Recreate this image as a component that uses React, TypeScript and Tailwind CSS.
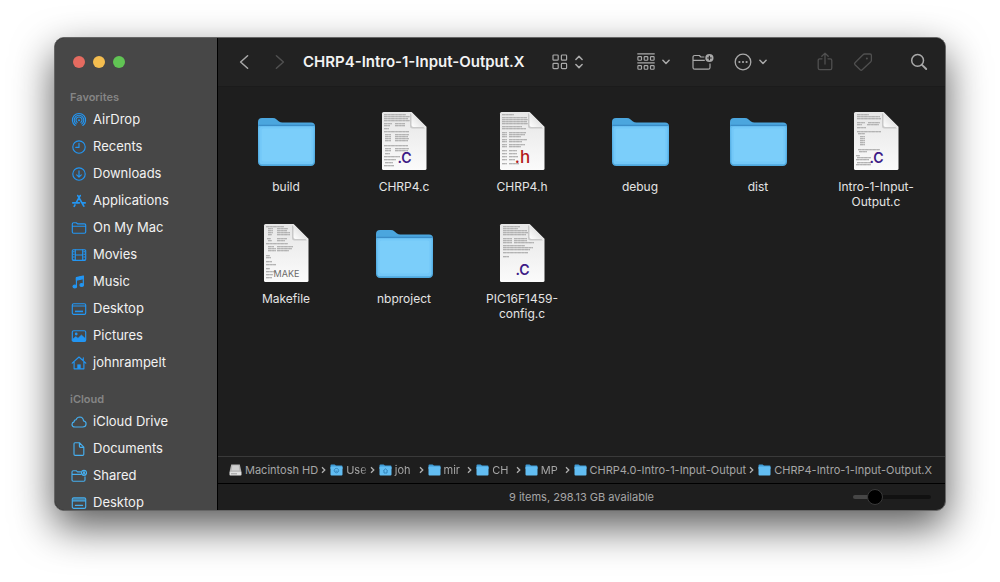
import * as React from "react";

type IconProps = { className?: string };

function SideIcon(props: { children: React.ReactNode }) {
  return (
    <svg
      viewBox="0 0 16 16"
      className="size-4 shrink-0"
      fill="none"
      stroke="currentColor"
      strokeWidth="1.15"
      strokeLinecap="round"
      strokeLinejoin="round"
      aria-hidden="true"
    >
      {props.children}
    </svg>
  );
}

const icons = {
  airdrop: (
    <SideIcon>
      <path d="M4.2 13.5A6.6 6.6 0 1 1 11.8 13.5" />
      <path d="M5.2 11.9A4.8 4.8 0 1 1 10.8 11.9" />
      <path d="M6.1 10.3A3 3 0 1 1 9.9 10.3" />
      <circle cx="8" cy="8.3" r="1" fill="currentColor" stroke="none" />
    </SideIcon>
  ),
  recents: (
    <SideIcon>
      <circle cx="8" cy="8" r="6.2" />
      <path d="M8 4.2V8.4H4.8" />
    </SideIcon>
  ),
  downloads: (
    <SideIcon>
      <circle cx="8" cy="8" r="6.2" />
      <path d="M8 4.8V11M5.7 8.9L8 11.1L10.3 8.9" />
    </SideIcon>
  ),
  applications: (
    <SideIcon>
      <path d="M9.2 2.6L5.4 9.4M6.8 2.6L12.8 13.2M4 11.9L3.2 13.3M1.8 9.8H8.3M11.6 9.8H14.2" strokeWidth="1.7" />
    </SideIcon>
  ),
  folder: (
    <SideIcon>
      <path d="M1.3 12V3.9Q1.3 2.7 2.5 2.7H5.2L6.5 3.8H13.4Q14.7 3.8 14.7 5V12Q14.7 13.2 13.4 13.2H2.6Q1.3 13.2 1.3 12ZM1.5 6.2H14.5" />
    </SideIcon>
  ),
  movies: (
    <SideIcon>
      <rect x="1.3" y="2.7" width="13.4" height="10.6" rx="1" />
      <path d="M4.3 2.8V13.2M11.7 2.8V13.2M4.4 8H11.6" />
      <path d="M2.8 4.2V12.4M13.2 4.2V12.4" strokeDasharray="1 1.6" strokeLinecap="butt" strokeWidth="1.6" />
    </SideIcon>
  ),
  music: (
    <SideIcon>
      <path d="M5.4 12.2V4L12.3 2.4V10.6" />
      <path d="M5.4 3.6L12.3 2V4.6L5.4 6.2Z" fill="currentColor" />
      <ellipse cx="3.8" cy="12.5" rx="1.8" ry="1.5" fill="currentColor" />
      <ellipse cx="10.7" cy="11" rx="1.8" ry="1.5" fill="currentColor" />
    </SideIcon>
  ),
  desktop: (
    <SideIcon>
      <rect x="1.3" y="2.7" width="13.4" height="10.6" rx="1.4" />
      <path d="M1.5 5H14.5" />
      <rect x="4" y="9.6" width="8" height="1.6" fill="currentColor" stroke="none" />
    </SideIcon>
  ),
  pictures: (
    <SideIcon>
      <rect x="1.3" y="2.7" width="13.4" height="10.6" rx="1.4" />
      <path d="M1.6 11.2L4.8 8.6L7 10.3L10.4 7L14.4 10.6V13H1.6Z" fill="currentColor" strokeWidth="0.6" />
      <circle cx="5.2" cy="6" r="1.4" fill="currentColor" stroke="none" />
    </SideIcon>
  ),
  home: (
    <SideIcon>
      <path d="M1.2 8.2L8 2L14.8 8.2M3.1 7V13.8H12.9V7M12.3 2.8V5.4" />
      <rect x="6.3" y="9.4" width="3.4" height="4.4" fill="currentColor" stroke="none" />
    </SideIcon>
  ),
  cloud: (
    <SideIcon>
      <path d="M4 13Q1 13 1 10.5Q1 8.4 3.1 7.9Q3 5.9 5 5.7Q6.2 3 8.8 3Q12.2 3.2 12.5 6.9Q15.2 7.4 15.1 10Q14.9 13 11.8 13Z" />
    </SideIcon>
  ),
  document: (
    <SideIcon>
      <path d="M4 1.7H8.4L12.8 6.2V13.2Q12.8 14.4 11.6 14.4H4.2Q3 14.4 3 13.2V2.8Q3 1.7 4 1.7ZM8.4 1.9V5.2Q8.4 6.3 9.5 6.3H12.7" />
    </SideIcon>
  ),
  shared: (
    <SideIcon>
      <path d="M9.6 3.8H6.4L5.2 2.7H2.3Q1 2.7 1 4V12Q1 13.2 2.3 13.2H12.8Q14 13.2 14 12V8.8M1.2 6.3H10" />
      <circle cx="13" cy="4.8" r="2.5" />
      <circle cx="13" cy="4.3" r="1.1" fill="currentColor" stroke="none" />
      <path d="M11.5 6.4Q13 5 14.5 6.4" />
    </SideIcon>
  ),
  cloudDesktop: (
    <SideIcon>
      <rect x="1.3" y="2.7" width="13.4" height="10.6" rx="1.4" />
      <rect x="1.6" y="3" width="12.8" height="3" fill="currentColor" fillOpacity="0.55" stroke="none" />
      <path d="M1.5 6H14.5M4.4 10.4H11.6" />
    </SideIcon>
  ),
};

const favorites = [
  { label: "AirDrop", icon: icons.airdrop },
  { label: "Recents", icon: icons.recents },
  { label: "Downloads", icon: icons.downloads },
  { label: "Applications", icon: icons.applications },
  { label: "On My Mac", icon: icons.folder },
  { label: "Movies", icon: icons.movies },
  { label: "Music", icon: icons.music },
  { label: "Desktop", icon: icons.desktop },
  { label: "Pictures", icon: icons.pictures },
  { label: "johnrampelt", icon: icons.home },
];

const icloud = [
  { label: "iCloud Drive", icon: icons.cloud },
  { label: "Documents", icon: icons.document },
  { label: "Shared", icon: icons.shared },
  { label: "Desktop", icon: icons.cloudDesktop },
];

function SidebarSection(props: {
  title: string;
  items: { label: string; icon: React.ReactNode }[];
  tint: string;
}) {
  return (
    <section>
      <h2 className="h-[18px] pl-[15px] text-[11px] leading-[18px] font-semibold text-[#858585]">{props.title}</h2>
      <ul>
        {props.items.map((item) => (
          <li key={item.label}>
            <a href="#" className="flex h-[27px] items-center gap-[6px] pl-4 text-[13px] text-[#f2f2f2]">
              <span className={props.tint}>{item.icon}</span>
              {item.label}
            </a>
          </li>
        ))}
      </ul>
    </section>
  );
}

function Sidebar() {
  return (
    <aside className="w-[163px] shrink-0 overflow-hidden border-r border-black bg-[#474747] pt-[18px]">
      <div className="mb-5 flex gap-2 pl-[18px]">
        <button aria-label="Close" className="size-3 rounded-full bg-[#e56b60]" />
        <button aria-label="Minimize" className="size-3 rounded-full bg-[#f4bd4f]" />
        <button aria-label="Zoom" className="size-3 rounded-full bg-[#61c454]" />
      </div>
      <nav className="flex flex-col gap-[14px]">
        <SidebarSection title="Favorites" items={favorites} tint="text-[#2396f3]" />
        <SidebarSection title="iCloud" items={icloud} tint="text-[#46aeee]" />
      </nav>
    </aside>
  );
}

function Chevron(props: IconProps) {
  return (
    <svg viewBox="0 0 8 6" className={props.className} fill="none" stroke="currentColor" strokeWidth="1.5" strokeLinecap="round" strokeLinejoin="round">
      <path d="M0.9 1.3L4 4.5L7.1 1.3" />
    </svg>
  );
}

function Toolbar() {
  return (
    <header className="flex h-[49px] shrink-0 items-center border-b border-[#1b1b1b] bg-[#222222] pr-[17px] pl-[21px] text-[#a9a9a9]">
      <button aria-label="Back">
        <svg viewBox="0 0 10 16" className="h-4 w-[10px]" fill="none" stroke="currentColor" strokeWidth="1.5" strokeLinecap="round" strokeLinejoin="round">
          <path d="M8.6 1.8L1.6 8L8.6 14.2" />
        </svg>
      </button>
      <button aria-label="Forward" disabled className="ml-[26px] text-[#505050]">
        <svg viewBox="0 0 10 16" className="h-4 w-[10px]" fill="none" stroke="currentColor" strokeWidth="1.5" strokeLinecap="round" strokeLinejoin="round">
          <path d="M1.4 1.8L8.4 8L1.4 14.2" />
        </svg>
      </button>
      <h1 className="ml-[18px] flex-1 truncate text-[15px] font-semibold text-[#f2f2f2]">CHRP4-Intro-1-Input-Output.X</h1>
      <button aria-label="View as icons" className="flex items-center gap-[7px]">
        <svg viewBox="0 0 16 16" className="size-4" fill="none" stroke="currentColor" strokeWidth="1.2">
          <rect x="1" y="1" width="5.2" height="5.2" rx="0.8" />
          <rect x="9.4" y="1" width="5.2" height="5.2" rx="0.8" />
          <rect x="1" y="9.4" width="5.2" height="5.2" rx="0.8" />
          <rect x="9.4" y="9.4" width="5.2" height="5.2" rx="0.8" />
        </svg>
        <svg viewBox="0 0 8 14" className="h-[14px] w-2" fill="none" stroke="currentColor" strokeWidth="1.5" strokeLinecap="round" strokeLinejoin="round">
          <path d="M0.9 4.5L4 1.4L7.1 4.5M0.9 9.5L4 12.6L7.1 9.5" />
        </svg>
      </button>
      <button aria-label="Group items" className="ml-[54px] flex items-center gap-[7px]">
        <svg viewBox="0 0 18 18" className="size-[18px]" fill="none" stroke="currentColor" strokeWidth="1.15">
          <path d="M0.3 0.9H17.7M0.3 9.9H17.7" />
          <rect x="0.9" y="3.6" width="3.6" height="3.6" rx="0.7" />
          <rect x="7.2" y="3.6" width="3.6" height="3.6" rx="0.7" />
          <rect x="13.5" y="3.6" width="3.6" height="3.6" rx="0.7" />
          <rect x="0.9" y="12.6" width="3.6" height="3.6" rx="0.7" />
          <rect x="7.2" y="12.6" width="3.6" height="3.6" rx="0.7" />
          <rect x="13.5" y="12.6" width="3.6" height="3.6" rx="0.7" />
        </svg>
        <Chevron className="h-[6px] w-2" />
      </button>
      <button aria-label="New folder" className="ml-[22px]">
        <svg viewBox="0 0 22 18" className="h-[18px] w-[22px]" fill="none" stroke="currentColor" strokeWidth="1.2" strokeLinejoin="round">
          <path d="M12.4 4H8.8L7.4 2.5H2.8Q1 2.5 1 4.3V14.4Q1 16.2 2.8 16.2H16.2Q18 16.2 18 14.4V10.4M1.2 7.4H12.8" />
          <circle cx="17.4" cy="5" r="4.1" fill="currentColor" stroke="none" />
          <path d="M17.4 2.7V7.3M15.1 5H19.7" stroke="#222222" />
        </svg>
      </button>
      <button aria-label="More actions" className="ml-5 flex items-center gap-[7px]">
        <svg viewBox="0 0 18 18" className="size-[18px]" fill="none" stroke="currentColor" strokeWidth="1.3">
          <circle cx="9" cy="9" r="7.8" />
          <g fill="currentColor" stroke="none">
            <circle cx="5.4" cy="9" r="1.1" />
            <circle cx="9" cy="9" r="1.1" />
            <circle cx="12.6" cy="9" r="1.1" />
          </g>
        </svg>
        <Chevron className="h-[6px] w-2" />
      </button>
      <button aria-label="Share" disabled className="ml-[50px] text-[#505050]">
        <svg viewBox="0 0 16 20" className="h-5 w-4" fill="none" stroke="currentColor" strokeWidth="1.3" strokeLinecap="round" strokeLinejoin="round">
          <path d="M5 6.8H2.8Q1.2 6.8 1.2 8.4V16Q1.2 17.6 2.8 17.6H13.2Q14.8 17.6 14.8 16V8.4Q14.8 6.8 13.2 6.8H11M8 12V1.2M4.8 4.2L8 1.1L11.2 4.2" />
        </svg>
      </button>
      <button aria-label="Tags" disabled className="ml-5 text-[#505050]">
        <svg viewBox="0 0 20 20" className="size-5" fill="none" stroke="currentColor" strokeWidth="1.3" strokeLinejoin="round">
          <path d="M11.6 2H17Q18.4 2 18.4 3.4V8.2Q18.4 9 17.8 9.7L9.2 17.8Q8.2 18.7 7.2 17.8L2 12.8Q1 11.7 2 10.7L10 2.8Q10.7 2 11.6 2Z" />
          <circle cx="13.9" cy="6.4" r="1" fill="currentColor" stroke="none" />
        </svg>
      </button>
      <button aria-label="Search" className="ml-[37px]">
        <svg viewBox="0 0 18 18" className="size-[18px]" fill="none" stroke="currentColor" strokeWidth="1.5" strokeLinecap="round">
          <circle cx="7.6" cy="7.4" r="5.9" />
          <path d="M12 11.8L16.2 16" strokeWidth="1.9" />
        </svg>
      </button>
    </header>
  );
}

function FolderArt() {
  return (
    <svg viewBox="0 0 64 64" className="size-16" aria-hidden="true">
      <defs>
        <linearGradient id="folder-edge" x1="0" y1="0" x2="0" y2="1">
          <stop offset="0" stopColor="#64bdf0" />
          <stop offset="1" stopColor="#4fa9de" />
        </linearGradient>
      </defs>
      <path d="M4 13Q4 9 8 9H19Q21 9 22.6 10.4L25 12.4Q26.4 13.4 28.4 13.4H57Q61 13.4 61 17.4V30H4Z" fill="#4ba6de" />
      <path d="M4 20Q4 16.6 7.4 16.6H57.6Q61 16.6 61 20V52.6Q61 57 56.6 57H8.4Q4 57 4 52.6Z" fill="url(#folder-edge)" />
      <path d="M4.4 16.4H60.6" stroke="#3b8dc7" strokeWidth="1.2" />
      <rect x="5.4" y="17.8" width="54.2" height="37.4" rx="2.8" fill="#73c8f8" />
      <rect x="7.6" y="19.6" width="49.8" height="33" rx="2" fill="#7bcefa" />
    </svg>
  );
}

// each entry is [x, y, width] of one line of page preview text
const previews: Record<string, number[][]> = {
  code: [
    [13, 5, 22], [13, 7, 26], [13, 9, 24], [13, 11, 26], [13, 14, 8], [24, 14, 10], [13, 16, 6], [24, 16, 10],
    [13, 19, 5], [13, 22, 25], [14, 25, 6], [24, 25, 14], [14, 27, 6], [24, 27, 13], [14, 29, 6], [24, 29, 14],
    [14, 31, 6], [24, 31, 13], [13, 36, 24], [14, 39, 6], [24, 39, 14], [14, 41, 6], [24, 41, 13], [14, 44, 5],
    [13, 47, 16], [13, 50, 12], [14, 53, 8], [13, 56, 10],
  ],
  header: [
    [13, 5, 12], [13, 8, 25], [13, 10, 26], [13, 12, 25], [13, 14, 26], [13, 17, 20], [13, 19, 24],
    [13, 23, 5], [20, 23, 17], [13, 25, 5], [20, 25, 16], [13, 27, 5], [20, 27, 12], [13, 30, 5], [20, 30, 18],
    [13, 32, 5], [20, 32, 13], [13, 35, 5], [20, 35, 16], [13, 37, 5], [20, 37, 12], [13, 41, 5], [20, 41, 8],
    [13, 44, 5], [20, 44, 8], [13, 47, 5], [20, 47, 9], [13, 50, 5], [20, 50, 6], [13, 54, 5], [20, 54, 10],
  ],
  sparse: [
    [14, 5, 12], [14, 7, 23], [14, 9, 24], [14, 13, 8], [25, 13, 12], [14, 15, 5], [24, 15, 12], [14, 18, 9],
    [14, 22, 24], [15, 24, 7], [17, 27, 5], [17, 29, 5], [17, 31, 5], [17, 33, 5], [17, 35, 5], [15, 40, 22],
    [16, 42, 8], [13, 46, 4], [14, 48, 14], [13, 50, 13], [14, 53, 14], [13, 55, 15],
  ],
  make: [
    [13, 5, 18], [15, 7, 5], [24, 7, 11], [15, 9, 5], [24, 9, 10], [15, 11, 5], [24, 11, 13], [15, 13, 4],
    [24, 13, 13], [14, 17, 4], [24, 17, 10], [15, 19, 4], [24, 19, 8], [13, 22, 22], [15, 25, 6], [24, 25, 16],
    [15, 27, 8], [24, 27, 15], [15, 29, 8], [24, 29, 12], [13, 34, 4], [13, 36, 5], [13, 40, 6], [13, 43, 10],
    [13, 47, 4], [13, 50, 10], [13, 53, 7], [13, 56, 6],
  ],
  config: [
    [14, 5, 17], [14, 7, 15], [14, 9, 24], [14, 11, 25], [14, 13, 23], [14, 17, 9], [25, 17, 13], [14, 19, 9],
    [25, 19, 13], [14, 21, 9], [25, 21, 20], [14, 24, 22], [14, 26, 30], [14, 28, 27], [14, 31, 25], [14, 35, 6],
  ],
};

function DocumentArt(props: { ext: string; preview: string }) {
  const make = props.ext === "MAKE";
  return (
    <svg viewBox="0 0 64 64" className="size-16" aria-hidden="true">
      <defs>
        <linearGradient id="page" x1="0" y1="0" x2="0" y2="1">
          <stop offset="0" stopColor="#e6e6e6" />
          <stop offset="1" stopColor="#fbfbfb" />
        </linearGradient>
        <linearGradient id="curl" x1="0" y1="1" x2="1" y2="0">
          <stop offset="0" stopColor="#ffffff" />
          <stop offset="0.55" stopColor="#e2e2e2" />
          <stop offset="1" stopColor="#c8c8c8" />
        </linearGradient>
      </defs>
      <path d="M10 4.5Q10 3 11.5 3H39.5L54.5 18V59.5Q54.5 61 53 61H11.5Q10 61 10 59.5Z" fill="url(#page)" />
      {previews[props.preview].map(([x, y, w], i) => (
        <g key={i} strokeWidth="1.3">
          <path d={`M${x - 1} ${y + 0.6}h${w}`} stroke="#c6c6c6" />
          <path d={`M${x - 1} ${y + 0.6}h${w}`} stroke="#a9a9a9" strokeDasharray="3.4 0.8 2.3 0.7" strokeOpacity="0.7" />
        </g>
      ))}
      <path d="M38 4V17Q38 19.5 40.5 19.5H53Z" fill="#000000" fillOpacity="0.14" />
      <path d="M39.5 3V16Q39.5 18 41.5 18H54.5Z" fill="url(#curl)" />
      {make ? (
        <text x="32.5" y="56" textAnchor="middle" className="fill-[#6b6b6b] text-[9px]">
          MAKE
        </text>
      ) : (
        <text
          x="32.5"
          y="54"
          textAnchor="middle"
          className={props.ext === ".h" ? "fill-[#b3191c] text-[17px] font-medium" : "fill-[#3c1a86] text-[14px] font-semibold"}
        >
          {props.ext}
        </text>
      )}
    </svg>
  );
}

const files = [
  { lines: ["build"] },
  { lines: ["CHRP4.c"], ext: ".C", preview: "code" },
  { lines: ["CHRP4.h"], ext: ".h", preview: "header" },
  { lines: ["debug"] },
  { lines: ["dist"] },
  { lines: ["Intro-1-Input-", "Output.c"], ext: ".C", preview: "sparse" },
  { lines: ["Makefile"], ext: "MAKE", preview: "make" },
  { lines: ["nbproject"] },
  { lines: ["PIC16F1459-", "config.c"], ext: ".C", preview: "config" },
];

function FileGrid() {
  return (
    <ul className="grid min-h-0 flex-1 auto-rows-[112px] grid-cols-[repeat(auto-fill,118px)] content-start overflow-hidden pt-[22px] pr-[10px] pl-[9px]">
      {files.map((file) => (
        <li key={file.lines[0]} className="flex flex-col items-center gap-[6px]">
          {file.ext && file.preview ? <DocumentArt ext={file.ext} preview={file.preview} /> : <FolderArt />}
          <p className="text-center text-[12px] leading-[15px] text-[#e4e4e4]">
            {file.lines.map((line) => (
              <span key={line} className="block">
                {line}
              </span>
            ))}
          </p>
        </li>
      ))}
    </ul>
  );
}

function SmallFolder(props: { glyph?: string }) {
  return (
    <svg viewBox="0 0 13 12" className="h-3 w-[13px] shrink-0" aria-hidden="true">
      <path d="M0.5 1.5Q0.5 0.5 1.5 0.5H4.6L6 1.6H11.6Q12.5 1.6 12.5 2.5V5H0.5Z" fill="#3f9bd6" />
      <rect x="0.5" y="2.4" width="12" height="9.1" rx="1" fill="#62bdf2" />
      {props.glyph && <path d={props.glyph} fill="none" stroke="#2f7fb5" strokeWidth="0.9" />}
    </svg>
  );
}

function DiskIcon() {
  return (
    <svg viewBox="0 0 13 12" className="h-3 w-[13px] shrink-0" aria-hidden="true">
      <path d="M2.2 0.5H10.8L12.5 8H0.5Z" fill="#b4b4b4" />
      <path d="M3.4 1.6H9.6L10.4 6.4H2.6Z" fill="#cfcfcf" />
      <rect x="0.5" y="7.8" width="12" height="3.7" rx="0.8" fill="#e0e0e0" />
      <path d="M2 9.8H8" stroke="#8d8d8d" strokeWidth="0.8" />
    </svg>
  );
}

const crumbs = [
  { label: "Macintosh HD", icon: <DiskIcon /> },
  { label: "Use", icon: <SmallFolder glyph="M6.5 4.4A2.2 2.2 0 1 1 6.4 4.4M5.3 7.2H7.7" />, clipped: true },
  { label: "joh", icon: <SmallFolder glyph="M4.2 7L6.5 4.8L8.8 7M5 6.6V9H8V6.6" />, clipped: true },
  { label: "mir", icon: <SmallFolder />, clipped: true },
  { label: "CH", icon: <SmallFolder />, clipped: true },
  { label: "MP", icon: <SmallFolder />, clipped: true },
  { label: "CHRP4.0-Intro-1-Input-Output", icon: <SmallFolder /> },
  { label: "CHRP4-Intro-1-Input-Output.X", icon: <SmallFolder /> },
];

function PathBar() {
  return (
    <nav aria-label="Path" className="h-[27px] shrink-0 border-t border-[#3a3a3a] pr-[13px] pl-[11px]">
      <ol className="flex h-full items-center gap-1 text-[11px] text-[#a6a6a6]">
        {crumbs.map((crumb, i) => (
          <li
            key={crumb.label}
            className={
              crumb.clipped ? "flex min-w-0 flex-1 items-center gap-[2px]" : "flex shrink-0 items-center gap-[3px]"
            }
          >
            {crumb.icon}
            <span
              className={
                crumb.clipped
                  ? "min-w-0 flex-1 mask-r-from-70% mask-r-to-110% pl-px whitespace-nowrap"
                  : "whitespace-nowrap"
              }
            >
              {crumb.label}
            </span>
            {i < crumbs.length - 1 && (
              <svg viewBox="0 0 5 8" className="h-2 w-[5px] shrink-0" fill="none" stroke="#b0b0b0" strokeWidth="1.3">
                <path d="M1 1.2L3.8 4L1 6.8" />
              </svg>
            )}
          </li>
        ))}
      </ol>
    </nav>
  );
}

function StatusBar() {
  return (
    <footer className="grid h-[27px] shrink-0 grid-cols-[1fr_auto_1fr] items-center border-t border-black text-[11px] text-[#a6a6a6]">
      <p className="col-start-2">9 items, 298.13 GB available</p>
      <input
        type="range"
        aria-label="Icon size"
        min={0}
        max={100}
        defaultValue={22}
        className="mr-[14px] h-4 w-[78px] appearance-none justify-self-end bg-transparent [&::-webkit-slider-runnable-track]:h-1 [&::-webkit-slider-runnable-track]:rounded-full [&::-webkit-slider-runnable-track]:bg-[linear-gradient(to_right,#464646_28%,#111111_28%)] [&::-webkit-slider-thumb]:-mt-[6px] [&::-webkit-slider-thumb]:size-4 [&::-webkit-slider-thumb]:appearance-none [&::-webkit-slider-thumb]:rounded-full [&::-webkit-slider-thumb]:border [&::-webkit-slider-thumb]:border-[#3a3a3a] [&::-webkit-slider-thumb]:bg-black"
      />
    </footer>
  );
}

export default function App() {
  return (
    <div className="flex h-screen bg-white px-[54px] pt-[37px] pb-[71px] font-['Inter',sans-serif]">
      <div className="flex min-w-0 flex-1 overflow-hidden rounded-[10px] border border-[#666666] bg-[#1e1e1e] shadow-[0_16px_40px_rgba(0,0,0,0.65)]">
        <Sidebar />
        <main className="flex min-w-0 flex-1 flex-col">
          <Toolbar />
          <FileGrid />
          <PathBar />
          <StatusBar />
        </main>
      </div>
    </div>
  );
}
